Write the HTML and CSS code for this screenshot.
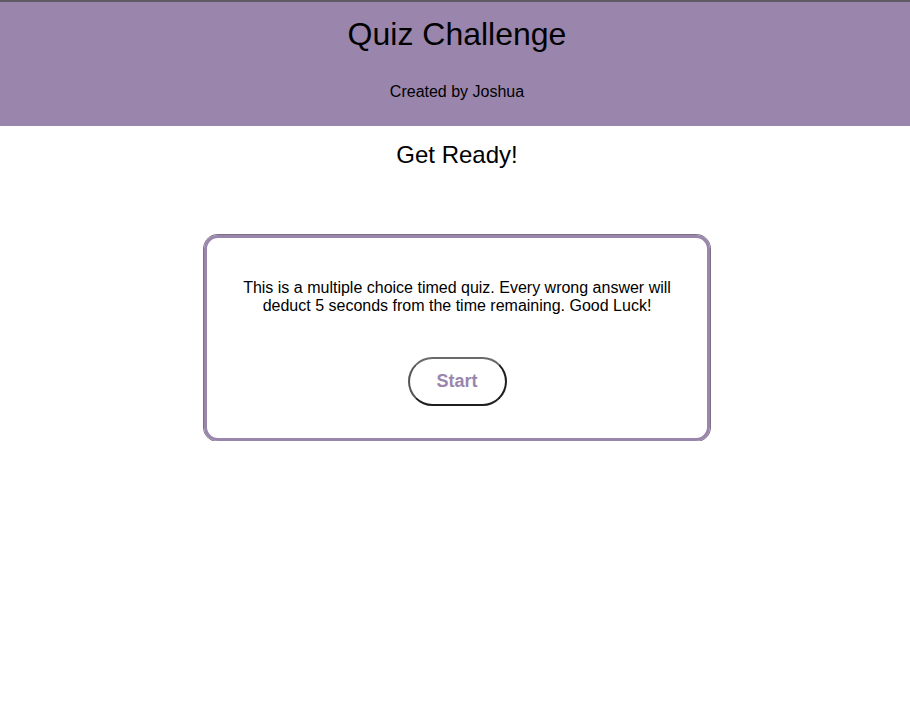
FILE: index.html
```html
<!DOCTYPE html>
<html lang="en">
<head>
<meta charset="utf-8">
<title>Quiz Challenge</title>
<link rel="stylesheet" href="styles.css">
</head>
<body>
<header class="site-header">
  <h1 class="title">Quiz Challenge</h1>
  <p class="byline">Created by Joshua</p>
</header>
<main class="main">
  <h2 class="ready">Get Ready!</h2>
  <section class="card">
    <p class="intro">This is a multiple choice timed quiz. Every wrong answer will deduct 5 seconds from the time remaining. Good Luck!</p>
    <button class="start" type="button">Start</button>
  </section>
</main>
</body>
</html>
```

FILE: styles.css
```css
* { box-sizing: border-box; }
html, body {
  margin: 0;
  padding: 0;
  background: #ffffff;
  font-family: "Liberation Sans", Arial, sans-serif;
  color: #000;
}
.site-header {
  background: #9a86ad;
  border-top: 2px solid #5f5a63;
  height: 126px;
  text-align: center;
  display: flex;
  flex-direction: column;
  align-items: center;
  padding: 14px 0 0 4px;
}
.title {
  margin: 0;
  font-size: 32px;
  font-weight: normal;
  line-height: 36px;
}
.byline {
  margin: 31px 0 0;
  font-size: 16px;
  line-height: 18px;
}
.main {
  display: flex;
  flex-direction: column;
  align-items: center;
  padding-left: 4px;
}
.ready {
  margin: 15px 0 0;
  font-size: 24px;
  font-weight: normal;
  line-height: 28px;
}
.card {
  margin-top: 66px;
  width: 506px;
  height: 206px;
  border: 3px solid #9a86ad;
  box-shadow: 0 0 0 1px #7a7282;
  border-radius: 14px;
  display: flex;
  flex-direction: column;
  align-items: center;
  padding: 41px 35px 0;
}
.intro {
  margin: 0;
  text-align: center;
  font-size: 16px;
  line-height: 18px;
}
.start {
  margin-top: 42px;
  width: 99px;
  height: 49px;
  border-radius: 25px;
  background: #fff;
  border: 2px solid #1e1e1e;
  border-top-color: #6a6a6a;
  border-left-color: #555;
  font-family: "Liberation Sans", Arial, sans-serif;
  font-size: 18px;
  font-weight: bold;
  color: #9a86ad;
  padding: 0;
  cursor: pointer;
}
```
